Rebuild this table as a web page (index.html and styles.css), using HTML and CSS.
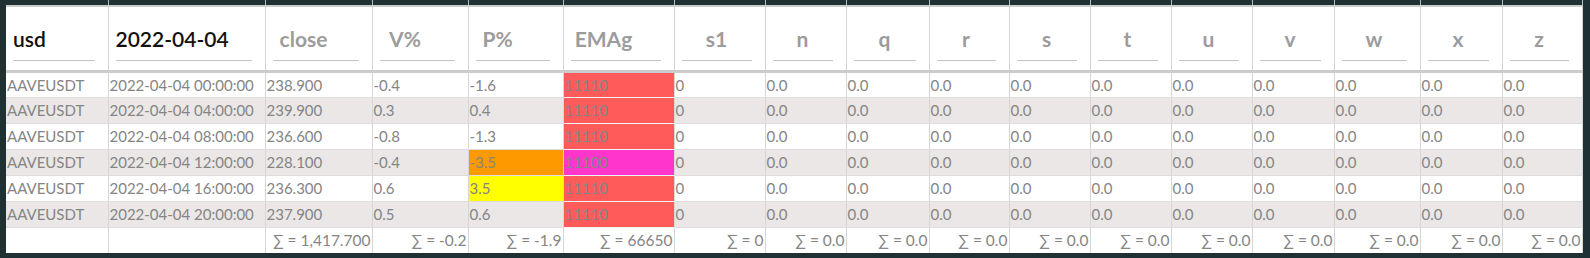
FILE: index.html
```html
<!DOCTYPE html>
<html>
<head>
<meta charset="utf-8">
<link rel="stylesheet" href="styles.css">
</head>
<body>
<div class="frame">
<table class="grid">
<colgroup>
<col class="c0"><col class="c1"><col class="c2"><col class="c3"><col class="c4"><col class="c5"><col class="c6"><col class="c7"><col class="c8"><col class="c9"><col class="c10"><col class="c11"><col class="c12"><col class="c13"><col class="c14"><col class="c15"><col class="c16">
</colgroup>
<thead>
<tr class="cap"><td></td><td></td><td></td><td></td><td></td><td></td><td></td><td></td><td></td><td></td><td></td><td></td><td></td><td></td><td></td><td></td><td></td></tr>
<tr class="head">
<th class="val"><div class="hbox">usd</div></th>
<th class="val"><div class="hbox">2022-04-04</div></th>
<th class="ph off"><div class="hbox">close</div></th>
<th class="ph off"><div class="hbox">V%</div></th>
<th class="ph off2"><div class="hbox">P%</div></th>
<th class="ph off"><div class="hbox">EMAg</div></th>
<th class="ph"><div class="hbox">s1</div></th>
<th class="ph"><div class="hbox">n</div></th>
<th class="ph"><div class="hbox">q</div></th>
<th class="ph"><div class="hbox">r</div></th>
<th class="ph"><div class="hbox">s</div></th>
<th class="ph"><div class="hbox">t</div></th>
<th class="ph"><div class="hbox">u</div></th>
<th class="ph"><div class="hbox">v</div></th>
<th class="ph"><div class="hbox">w</div></th>
<th class="ph"><div class="hbox">x</div></th>
<th class="ph"><div class="hbox">z</div></th>
</tr>
</thead>
<tbody>
<tr><td>AAVEUSDT</td><td>2022-04-04 00:00:00</td><td>238.900</td><td>-0.4</td><td>-1.6</td><td class="red">11110</td><td>0</td><td>0.0</td><td>0.0</td><td>0.0</td><td>0.0</td><td>0.0</td><td>0.0</td><td>0.0</td><td>0.0</td><td>0.0</td><td>0.0</td></tr>
<tr class="alt"><td>AAVEUSDT</td><td>2022-04-04 04:00:00</td><td>239.900</td><td>0.3</td><td>0.4</td><td class="red">11110</td><td>0</td><td>0.0</td><td>0.0</td><td>0.0</td><td>0.0</td><td>0.0</td><td>0.0</td><td>0.0</td><td>0.0</td><td>0.0</td><td>0.0</td></tr>
<tr><td>AAVEUSDT</td><td>2022-04-04 08:00:00</td><td>236.600</td><td>-0.8</td><td>-1.3</td><td class="red">11110</td><td>0</td><td>0.0</td><td>0.0</td><td>0.0</td><td>0.0</td><td>0.0</td><td>0.0</td><td>0.0</td><td>0.0</td><td>0.0</td><td>0.0</td></tr>
<tr class="alt"><td>AAVEUSDT</td><td>2022-04-04 12:00:00</td><td>228.100</td><td>-0.4</td><td class="org">-3.5</td><td class="mag">11100</td><td>0</td><td>0.0</td><td>0.0</td><td>0.0</td><td>0.0</td><td>0.0</td><td>0.0</td><td>0.0</td><td>0.0</td><td>0.0</td><td>0.0</td></tr>
<tr><td>AAVEUSDT</td><td>2022-04-04 16:00:00</td><td>236.300</td><td>0.6</td><td class="yel">3.5</td><td class="red">11110</td><td>0</td><td>0.0</td><td>0.0</td><td>0.0</td><td>0.0</td><td>0.0</td><td>0.0</td><td>0.0</td><td>0.0</td><td>0.0</td><td>0.0</td></tr>
<tr class="alt"><td>AAVEUSDT</td><td>2022-04-04 20:00:00</td><td>237.900</td><td>0.5</td><td>0.6</td><td class="red">11110</td><td>0</td><td>0.0</td><td>0.0</td><td>0.0</td><td>0.0</td><td>0.0</td><td>0.0</td><td>0.0</td><td>0.0</td><td>0.0</td><td>0.0</td></tr>
</tbody>
<tfoot>
<tr><td></td><td></td><td>∑ = 1,417.700</td><td>∑ = -0.2</td><td>∑ = -1.9</td><td>∑ = 66650</td><td>∑ = 0</td><td>∑ = 0.0</td><td>∑ = 0.0</td><td>∑ = 0.0</td><td>∑ = 0.0</td><td>∑ = 0.0</td><td>∑ = 0.0</td><td>∑ = 0.0</td><td>∑ = 0.0</td><td>∑ = 0.0</td><td>∑ = 0.0</td></tr>
</tfoot>
</table>
</div>
</body>
</html>
```
FILE: styles.css
```css
html, body {
  margin: 0;
  padding: 0;
  background: #1f3133;
}
.frame {
  width: 1590px;
  height: 258px;
  box-sizing: border-box;
  padding: 0 6px 0 6px;
  overflow: hidden;
  background: #1f3133;
}
.grid {
  table-layout: fixed;
  border-collapse: collapse;
  width: 1576px;
  font-family: "Lato", "Open Sans", sans-serif;
  background: #fff;
}
.c0 { width: 102px; }
.c1 { width: 157px; }
.c2 { width: 107px; }
.c3 { width: 96px; }
.c4 { width: 95px; }
.c5 { width: 111px; }
.c6 { width: 91px; }
.c7 { width: 81px; }
.c8 { width: 83px; }
.c9 { width: 80px; }
.c10 { width: 81px; }
.c11 { width: 81px; }
.c12 { width: 81px; }
.c13 { width: 82px; }
.c14 { width: 86px; }
.c15 { width: 82px; }
.c16 { width: 80px; }

.cap { height: 6px; }
.cap td {
  padding: 0;
  background: #1f3133;
  border-right: 1px solid #b9bdbd;
}
.head { height: 65px; }
.head th {
  padding: 0 13px 9px 7px;
  vertical-align: bottom;
  border-top: 2px solid #cccccc;
  border-bottom: 3px solid #cccccc;
  border-right: 1px solid #d3d3d3;
  background: #fff;
}
.hbox {
  border-bottom: 1px solid #c4c4c4;
  padding-bottom: 8px;
  font-size: 21px;
  line-height: 26px;
  font-weight: 700;
  white-space: nowrap;
}
.val .hbox {
  text-align: left;
  color: #111;
  font-weight: 600;
}
.ph .hbox {
  text-align: center;
  color: #9c9c9c;
}
.off .hbox { padding-right: 24px; }
.off2 .hbox { padding-right: 30px; }

tbody tr, tfoot tr { height: 26px; }
tbody td, tfoot td {
  padding: 0 0 0 1px;
  font-size: 15px;
  font-weight: 400;
  line-height: 24px;
  color: #858585;
  border-right: 1px solid #d6d6d6;
  border-bottom: 1px solid #dddddd;
  white-space: nowrap;
  overflow: hidden;
}
tbody tr { background: #ffffff; }
tbody tr.alt { background: #eae7e6; }
tfoot td {
  text-align: right;
  padding: 0 1px 0 0;
  font-size: 15.5px;
  border-top: 1px solid #cccccc;
  border-bottom: none;
  background: #fff;
}
td.red { background: #ff5b5b; border-bottom-color: #f4f4f4; }
td.mag { background: #ff35cc; border-bottom-color: #f4f4f4; }
td.org { background: #ff9900; }
td.yel { background: #ffff00; }
```
